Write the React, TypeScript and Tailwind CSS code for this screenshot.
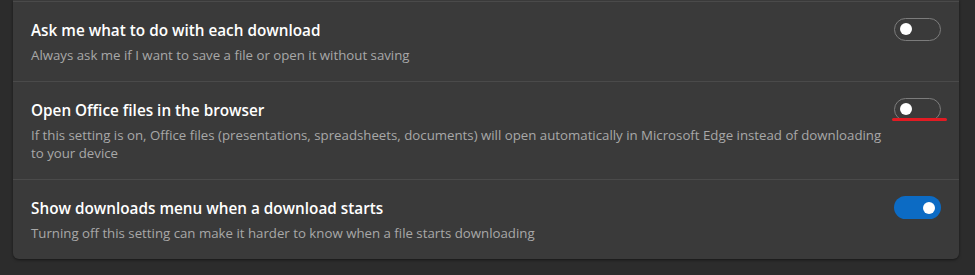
import React from "react";

function Toggle({ on, marked }: { on?: boolean; marked?: boolean }) {
  return (
    <div className="relative mt-[-1px] shrink-0">
      <div
        className={
          on
            ? "relative h-[23px] w-[47px] rounded-full bg-[#0c6bc4]"
            : "relative h-[23px] w-[47px] rounded-full border-[1.5px] border-[#7c7c7c] bg-transparent"
        }
      >
        <div
          className={
            on
              ? "absolute right-[6px] top-[5.5px] h-[12px] w-[12px] rounded-full bg-white"
              : "absolute left-[5px] top-[4px] h-[12px] w-[12px] rounded-full bg-white"
          }
        />
      </div>
      {marked && (
        <div className="absolute left-[-2px] top-[20px] h-[3px] w-[55px] rounded-full bg-[#e21b23]" />
      )}
    </div>
  );
}

function Row({
  title,
  desc,
  on,
  marked,
}: {
  title: string;
  desc: React.ReactNode;
  on?: boolean;
  marked?: boolean;
}) {
  return (
    <div className="flex items-start justify-between border-t border-[#4a4a4a] pb-[17px] pl-[18px] pr-[18px] pt-[17px]">
      <div className="flex flex-col">
        <div className="text-[15.3px] font-semibold leading-[22px] text-white">{title}</div>
        <div className="mt-[5px] text-[13.25px] leading-[18px] text-[#a8a8a8]">{desc}</div>
      </div>
      <Toggle on={on} marked={marked} />
    </div>
  );
}

export default function App() {
  return (
    <div
      className="h-[275px] w-[975px] bg-[#2c2c2c] pl-[13px] pr-[16px]"
      style={{ fontFamily: '"Open Sans", "Noto Sans", sans-serif' }}
    >
      <div className="rounded-b-md bg-[#3a3a3a] pt-px shadow-[0_1px_3px_rgba(0,0,0,0.5)]">
        <Row
          title="Ask me what to do with each download"
          desc="Always ask me if I want to save a file or open it without saving"
        />
        <Row
          title="Open Office files in the browser"
          desc={
            <>
              If this setting is on, Office files (presentations, spreadsheets, documents) will open automatically in Microsoft Edge instead of downloading
              <br />
              to your device
            </>
          }
          marked
        />
        <Row
          title="Show downloads menu when a download starts"
          desc="Turning off this setting can make it harder to know when a file starts downloading"
          on
        />
      </div>
    </div>
  );
}
